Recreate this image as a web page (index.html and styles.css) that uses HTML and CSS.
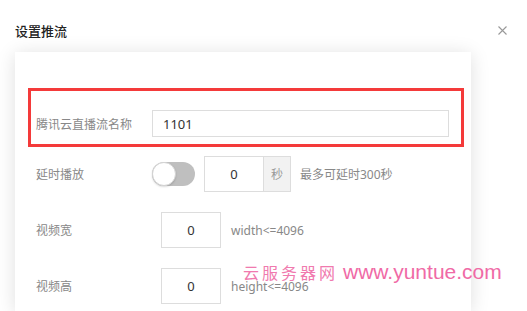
FILE: index.html
```html
<!DOCTYPE html>
<html lang="zh-CN">
<head>
    <meta charset="UTF-8">
    <title>设置推流</title>
    <link rel="stylesheet" href="styles.css">
</head>
<body>

    <div class="dialog">
        <div class="dialog-header">
            <span class="dialog-title">设置推流</span>
            <svg class="close" width="9" height="9" viewBox="0 0 9 9">
                <path d="M0.5 0.5 L8.5 8.5 M8.5 0.5 L0.5 8.5" stroke="#999" stroke-width="1.1" fill="none"/>
            </svg>
        </div>

        <div class="card">
            <div class="highlight">
                <div class="row">
                    <label class="label">腾讯云直播流名称</label>
                    <input type="text" class="text-input" value="1101">
                </div>
            </div>

            <div class="rows">
                <div class="row">
                    <label class="label">延时播放</label>
                    <span class="switch"><span class="knob"></span></span>
                    <div class="group">
                        <input type="text" class="num-input" value="0">
                        <span class="addon">秒</span>
                    </div>
                    <span class="hint">最多可延时300秒</span>
                </div>

                <div class="row">
                    <label class="label label-wide">视频宽</label>
                    <input type="text" class="num-input" value="0">
                    <span class="hint hint-wide">width&lt;=4096</span>
                </div>

                <div class="row">
                    <label class="label label-wide">视频高</label>
                    <input type="text" class="num-input" value="0">
                    <span class="hint hint-wide">height&lt;=4096</span>
                </div>
            </div>
        </div>
    </div>

    <div class="watermark">
        <span class="wm-cn">云服务器网</span>
        <span class="wm-en">www.yuntue.com</span>
    </div>

</body>
</html>
```

FILE: styles.css
```css
* {
    box-sizing: border-box;
    font-family: "Noto Sans", "Noto Sans CJK SC", sans-serif;
}
body {
    margin: 0;
    background: #fff;
    width: 527px;
    height: 311px;
    overflow: hidden;
    position: relative;
}
.dialog-header {
    display: flex;
    justify-content: space-between;
    align-items: center;
    height: 52px;
    padding: 0 20px 0 15px;
}
.dialog-title {
    font-size: 13px;
    color: #222;
    font-weight: 500;
    margin-top: 8px;
}
.close {
    margin-top: 8px;
}
.card {
    margin-left: 15px;
    width: 456px;
    height: 259px;
    background: #fff;
    box-shadow: 0 2px 18px rgba(0, 0, 0, 0.13);
    padding: 36px 0 0 13px;
}
.highlight {
    width: 436px;
    height: 59px;
    border: 3px solid #f43a3a;
    padding: 19px 0 0 5px;
}
.row {
    display: flex;
    align-items: center;
    height: 27px;
}
.label {
    width: 116px;
    font-size: 12px;
    color: #888;
    flex-shrink: 0;
}
.label-wide {
    width: 125px;
}
.text-input {
    width: 297px;
    height: 27px;
    border: 1px solid #ddd;
    padding: 0 10px;
    font-size: 13px;
    color: #333;
    outline: none;
}
.rows {
    display: flex;
    flex-direction: column;
    gap: 20px;
    margin-top: 9px;
    padding-left: 8px;
}
.rows .row {
    height: 36px;
}
.switch {
    position: relative;
    width: 43px;
    height: 24px;
    border-radius: 12px;
    background: #bfbfbf;
    flex-shrink: 0;
}
.knob {
    position: absolute;
    left: 0;
    top: 0;
    width: 24px;
    height: 24px;
    border-radius: 50%;
    background: #fff;
    border: 1px solid #d4d4d4;
    box-shadow: 0 1px 2px rgba(0, 0, 0, 0.15);
}
.group {
    display: flex;
    margin-left: 9px;
}
.num-input {
    width: 60px;
    height: 36px;
    border: 1px solid #ddd;
    text-align: center;
    font-size: 13px;
    color: #333;
    outline: none;
}
.addon {
    width: 27px;
    height: 36px;
    border: 1px solid #ddd;
    border-left: none;
    background: #f2f2f2;
    color: #999;
    font-size: 12px;
    display: flex;
    align-items: center;
    justify-content: center;
}
.hint {
    margin-left: 9px;
    font-size: 12px;
    color: #888;
}
.hint-wide {
    margin-left: 10px;
}
.watermark {
    position: absolute;
    left: 243px;
    top: 260px;
    display: flex;
    align-items: center;
    color: #f06aa6;
}
.wm-cn {
    font-family: "Noto Sans CJK SC", sans-serif;
    font-size: 16px;
    letter-spacing: 3px;
    color: #f07aae;
}
.wm-en {
    font-family: "Liberation Sans", sans-serif;
    font-size: 21px;
    margin-left: 5px;
}
```
